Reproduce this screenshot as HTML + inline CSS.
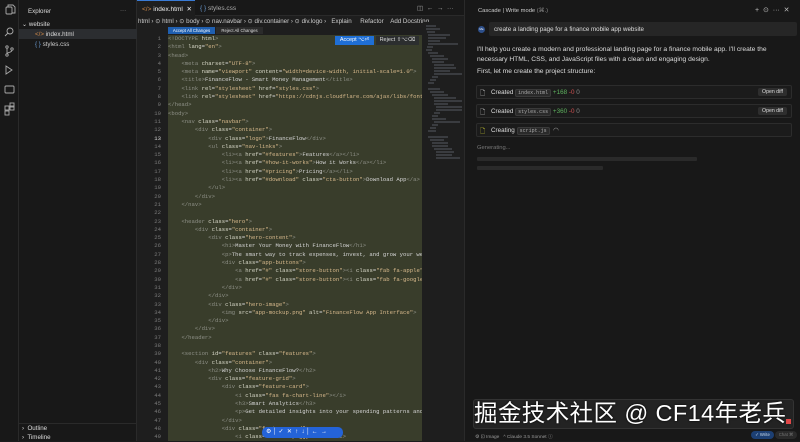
<!DOCTYPE html>
<html><head><meta charset="utf-8"><style>
*{margin:0;padding:0;box-sizing:border-box}
body{width:800px;height:441px;overflow:hidden;background:#1b1b1c;font-family:"Liberation Sans",sans-serif;color:#ccc;position:relative}
.abs{position:absolute}
#act{left:0;top:0;width:19px;height:441px;background:#181818;border-right:1px solid #2a2a2a}
#exp{left:19px;top:0;width:118px;height:441px;background:#181818;border-right:1px solid #2a2a2a;font-size:6.2px}
#tabs{left:137px;top:0;width:327px;height:16px;background:#181818;border-bottom:1px solid #2a2a2a}
#editor{left:137px;top:16px;width:327px;height:425px;background:#1e1e1e}
#code{left:168px;top:35px;width:254px;height:406px;background:#393d2b;overflow:hidden}
pre{font-family:"Liberation Mono",monospace;font-size:5.6px;line-height:8.3px;color:#d4d4d4;white-space:pre}
.t{color:#8d8f86}.a{color:#d8d8c8}.s{color:#d7b98c}
#gut{left:137px;top:35px;width:24px;text-align:right;color:#7a7a7a}
#mini{left:423px;top:22px;width:40px;height:419px;background:#1e1e1e}
#right{left:464px;top:0;width:336px;height:441px;background:#181818;border-left:1px solid #2a2a2a;font-size:6px}
.row{position:absolute;left:476px;width:316px;height:14px;border:1px solid #2c2c2c;border-radius:2px;background:#1b1b1b;font-size:6.3px;color:#ddd}
.chip{font-family:"Liberation Mono",monospace;background:#2a2a2a;border:1px solid #3a3a3a;border-radius:2px;padding:0 2px;font-size:5px;color:#aaa}
.btn{position:absolute;right:4px;top:2px;background:#2e2e2e;border-radius:2px;padding:1px 4px;font-size:5.2px;color:#ddd}
</style></head><body>
<div id="act" class="abs">
<svg width="19" height="120" viewBox="0 0 19 120" fill="none" stroke="#aaa" stroke-width="0.9">
<rect x="6" y="7" width="6" height="7" rx="1"/><path d="M8 7V5h5l2 2v6h-3"/>
<circle cx="10" cy="31" r="3"/><path d="M8 33l-3 3"/>
<circle cx="7" cy="47" r="1.2"/><circle cx="7" cy="55" r="1.2"/><circle cx="12" cy="49" r="1.2"/><path d="M7 48v6M12 50c0 3-5 2-5 4"/>
<path d="M6 66l6 4-6 4z"/>
<rect x="5" y="86" width="9" height="7" rx="1"/>
<rect x="5" y="106" width="4" height="4"/><rect x="10" y="106" width="4" height="4"/><rect x="5" y="111" width="4" height="4"/><rect x="10" y="103" width="4" height="4"/>
</svg></div>
<div id="exp" class="abs">
<div class="abs" style="left:9px;top:8px;color:#ddd">Explorer</div>
<div class="abs" style="left:101px;top:7px;color:#999">···</div>
<div class="abs" style="left:3px;top:21px;color:#ddd">⌄ website</div>
<div class="abs" style="left:0;top:29px;width:118px;height:10px;background:#2b2d30"></div>
<div class="abs" style="left:16px;top:31px;color:#ddd"><span style="color:#d08a4a">&lt;/&gt;</span> index.html</div>
<div class="abs" style="left:16px;top:41px;color:#ccc"><span style="color:#6a9ad0">{ }</span> styles.css</div>
<div class="abs" style="left:0;top:423px;width:118px;border-top:1px solid #2a2a2a"></div>
<div class="abs" style="left:3px;top:425px;color:#ddd">›&nbsp; Outline</div>
<div class="abs" style="left:3px;top:434px;color:#ddd">›&nbsp; Timeline</div>
</div>
<div id="tabs" class="abs" style="font-size:6.5px">
<div class="abs" style="left:0;top:0;width:58px;height:16px;background:#1e1e1e;border-top:1px solid #3a7bd5"></div>
<div class="abs" style="left:5px;top:5px;color:#eee"><span style="color:#d08a4a">&lt;/&gt;</span> index.html&nbsp; ✕</div>
<div class="abs" style="left:63px;top:5px;color:#aaa"><span style="color:#6a9ad0">{ }</span> styles.css</div>
<div class="abs" style="left:280px;top:4px;color:#aaa">◫&nbsp; ←&nbsp; →&nbsp; ···</div>
</div>
<div id="editor" class="abs"></div>
<div class="abs" style="left:138px;top:18px;font-size:6.2px;color:#ccc;white-space:nowrap">html › ⊙ html › ⊙ body › ⊙ nav.navbar › ⊙ div.container › ⊙ div.logo ›&nbsp;&nbsp; Explain&nbsp;&nbsp;&nbsp;&nbsp; Refactor&nbsp;&nbsp;&nbsp; Add Docstring</div>
<div class="abs" style="left:168px;top:27px;width:47px;height:7px;background:#1f5fb0;color:#fff;font-size:4.3px;line-height:7px;text-align:center">Accept All Changes</div>
<div class="abs" style="left:216px;top:27px;width:47px;height:7px;background:#2b2b2b;color:#ddd;font-size:4.3px;line-height:7px;text-align:center">Reject All Changes</div>
<div id="code" class="abs"><pre><span class="t">&lt;!DOCTYPE</span> <span class="a">html</span><span class="t">&gt;</span>
<span class="t">&lt;html</span> <span class="a">lang</span>=<span class="s">"en"</span><span class="t">&gt;</span>
<span class="t">&lt;head&gt;</span>
    <span class="t">&lt;meta</span> <span class="a">charset</span>=<span class="s">"UTF-8"</span><span class="t">&gt;</span>
    <span class="t">&lt;meta</span> <span class="a">name</span>=<span class="s">"viewport"</span> <span class="a">content</span>=<span class="s">"width=device-width, initial-scale=1.0"</span><span class="t">&gt;</span>
    <span class="t">&lt;title&gt;</span>FinanceFlow - Smart Money Management<span class="t">&lt;/title&gt;</span>
    <span class="t">&lt;link</span> <span class="a">rel</span>=<span class="s">"stylesheet"</span> <span class="a">href</span>=<span class="s">"styles.css"</span><span class="t">&gt;</span>
    <span class="t">&lt;link</span> <span class="a">rel</span>=<span class="s">"stylesheet"</span> <span class="a">href</span>=<span class="s">"https://cdnjs.cloudflare.com/ajax/libs/font</span>
<span class="t">&lt;/head&gt;</span>
<span class="t">&lt;body&gt;</span>
    <span class="t">&lt;nav</span> <span class="a">class</span>=<span class="s">"navbar"</span><span class="t">&gt;</span>
        <span class="t">&lt;div</span> <span class="a">class</span>=<span class="s">"container"</span><span class="t">&gt;</span>
            <span class="t">&lt;div</span> <span class="a">class</span>=<span class="s">"logo"</span><span class="t">&gt;</span>FinanceFlow<span class="t">&lt;/div&gt;</span>
            <span class="t">&lt;ul</span> <span class="a">class</span>=<span class="s">"nav-links"</span><span class="t">&gt;</span>
                <span class="t">&lt;li&gt;&lt;a</span> <span class="a">href</span>=<span class="s">"#features"</span><span class="t">&gt;</span>Features<span class="t">&lt;/a&gt;&lt;/li&gt;</span>
                <span class="t">&lt;li&gt;&lt;a</span> <span class="a">href</span>=<span class="s">"#how-it-works"</span><span class="t">&gt;</span>How it Works<span class="t">&lt;/a&gt;&lt;/li&gt;</span>
                <span class="t">&lt;li&gt;&lt;a</span> <span class="a">href</span>=<span class="s">"#pricing"</span><span class="t">&gt;</span>Pricing<span class="t">&lt;/a&gt;&lt;/li&gt;</span>
                <span class="t">&lt;li&gt;&lt;a</span> <span class="a">href</span>=<span class="s">"#download"</span> <span class="a">class</span>=<span class="s">"cta-button"</span><span class="t">&gt;</span>Download App<span class="t">&lt;/a&gt;</span>
            <span class="t">&lt;/ul&gt;</span>
        <span class="t">&lt;/div&gt;</span>
    <span class="t">&lt;/nav&gt;</span>

    <span class="t">&lt;header</span> <span class="a">class</span>=<span class="s">"hero"</span><span class="t">&gt;</span>
        <span class="t">&lt;div</span> <span class="a">class</span>=<span class="s">"container"</span><span class="t">&gt;</span>
            <span class="t">&lt;div</span> <span class="a">class</span>=<span class="s">"hero-content"</span><span class="t">&gt;</span>
                <span class="t">&lt;h1&gt;</span>Master Your Money with FinanceFlow<span class="t">&lt;/h1&gt;</span>
                <span class="t">&lt;p&gt;</span>The smart way to track expenses, invest, and grow your wealth
                <span class="t">&lt;div</span> <span class="a">class</span>=<span class="s">"app-buttons"</span><span class="t">&gt;</span>
                    <span class="t">&lt;a</span> <span class="a">href</span>=<span class="s">"#"</span> <span class="a">class</span>=<span class="s">"store-button"</span><span class="t">&gt;&lt;i</span> <span class="a">class</span>=<span class="s">"fab fa-apple"</span>
                    <span class="t">&lt;a</span> <span class="a">href</span>=<span class="s">"#"</span> <span class="a">class</span>=<span class="s">"store-button"</span><span class="t">&gt;&lt;i</span> <span class="a">class</span>=<span class="s">"fab fa-google</span>
                <span class="t">&lt;/div&gt;</span>
            <span class="t">&lt;/div&gt;</span>
            <span class="t">&lt;div</span> <span class="a">class</span>=<span class="s">"hero-image"</span><span class="t">&gt;</span>
                <span class="t">&lt;img</span> <span class="a">src</span>=<span class="s">"app-mockup.png"</span> <span class="a">alt</span>=<span class="s">"FinanceFlow App Interface"</span><span class="t">&gt;</span>
            <span class="t">&lt;/div&gt;</span>
        <span class="t">&lt;/div&gt;</span>
    <span class="t">&lt;/header&gt;</span>

    <span class="t">&lt;section</span> <span class="a">id</span>=<span class="s">"features"</span> <span class="a">class</span>=<span class="s">"features"</span><span class="t">&gt;</span>
        <span class="t">&lt;div</span> <span class="a">class</span>=<span class="s">"container"</span><span class="t">&gt;</span>
            <span class="t">&lt;h2&gt;</span>Why Choose FinanceFlow?<span class="t">&lt;/h2&gt;</span>
            <span class="t">&lt;div</span> <span class="a">class</span>=<span class="s">"feature-grid"</span><span class="t">&gt;</span>
                <span class="t">&lt;div</span> <span class="a">class</span>=<span class="s">"feature-card"</span><span class="t">&gt;</span>
                    <span class="t">&lt;i</span> <span class="a">class</span>=<span class="s">"fas fa-chart-line"</span><span class="t">&gt;&lt;/i&gt;</span>
                    <span class="t">&lt;h3&gt;</span>Smart Analytics<span class="t">&lt;/h3&gt;</span>
                    <span class="t">&lt;p&gt;</span>Get detailed insights into your spending patterns and
                <span class="t">&lt;/div&gt;</span>
                <span class="t">&lt;div</span> <span class="a">class</span>=<span class="s">"feature-card"</span><span class="t">&gt;</span>
                    <span class="t">&lt;i</span> <span class="a">class</span>=<span class="s">"fas fa-piggy-bank"</span><span class="t">&gt;&lt;/i&gt;</span></pre></div>
<div id="gut" class="abs"><pre style="color:#7a7a7a">1
2
3
4
5
6
7
8
9
10
11
12
<span style="color:#ddd">13</span>
14
15
16
17
18
19
20
21
22
23
24
25
26
27
28
29
30
31
32
33
34
35
36
37
38
39
40
41
42
43
44
45
46
47
48
49</pre></div>
<div class="abs" style="left:335px;top:36px;width:39px;height:9px;background:#1f6fd6;color:#fff;font-size:5.5px;line-height:9px;text-align:center">Accept ⌥⏎</div>
<div class="abs" style="left:376px;top:36px;width:43px;height:9px;background:#2c2e2f;color:#ddd;font-size:5.5px;line-height:9px;text-align:center">Reject ⇧⌥⌫</div>
<div id="mini" class="abs">
<svg width="40" height="140" stroke="#6a6e78" stroke-width="0.7">
<path d="M3 4h10M3 7h14M4 10h8M5 13h22M5 16h18M5 19h12M5 22h30M4 25h6M3 28h6M5 31h10M7 34h14M9 37h16M9 40h12M11 43h20M11 46h22M11 49h16M11 52h28M9 55h6M7 58h6M5 61h6M5 67h12M7 70h14M9 73h16M11 76h22M11 79h28M11 82h14M13 85h26M13 88h26M11 91h6M9 94h6M9 97h14M11 100h26M9 103h6M7 106h6M5 109h8M5 115h20M7 118h14M9 121h16M9 124h16M11 127h18M13 130h18M13 133h16M13 136h24"/>
</svg></div>
<div id="right" class="abs">
<div class="abs" style="left:13px;top:8px;color:#ccc;font-size:5.8px">Cascade | Write mode <span style="color:#888">(⌘.)</span></div>
<div class="abs" style="left:290px;top:6px;color:#bbb;font-size:7px">+&nbsp; ⊙&nbsp; ···&nbsp; ✕</div>
<div class="abs" style="left:24px;top:22px;width:308px;height:14px;background:#262626;border-radius:2px"></div>
<div class="abs" style="left:13px;top:26px;width:7px;height:7px;border-radius:50%;background:#2d4f8a;color:#fff;font-size:3px;text-align:center;line-height:7px">Me</div>
<div class="abs" style="left:29px;top:26px;color:#ddd;font-size:6.2px">create a landing page for a finance mobile app website</div>
<div class="abs" style="left:12px;top:45px;width:310px;color:#ddd;font-size:6.7px;line-height:10px">I'll help you create a modern and professional landing page for a finance mobile app. I'll create the necessary HTML, CSS, and JavaScript files with a clean and engaging design.</div>
<div class="abs" style="left:12px;top:68px;color:#ddd;font-size:6.7px">First, let me create the project structure:</div>
<div class="abs" style="left:12px;top:145px;color:#777;font-size:5.8px">Generating...</div>
<div class="abs" style="left:12px;top:157px;width:220px;height:4px;background:#2a2a2a;border-radius:1px"></div>
<div class="abs" style="left:12px;top:166px;width:126px;height:4px;background:#2a2a2a;border-radius:1px"></div>
<div class="abs" style="left:8px;top:399px;width:321px;height:30px;background:#232323;border:1px solid #333;border-radius:3px"></div>
<div class="abs" style="left:10px;top:433px;color:#999;font-size:4.8px">⚙ ⊡ Image&nbsp;&nbsp; ^ Claude 3.5 Sonnet ⓘ</div>
<div class="abs" style="left:286px;top:431px;width:23px;height:8px;background:#1c3f73;border-radius:4px;color:#cde;font-size:4.3px;line-height:8px;text-align:center">✓ Write</div>
<div class="abs" style="left:310px;top:431px;width:22px;height:8px;background:#2a2a2a;border-radius:4px;color:#777;font-size:4.3px;line-height:8px;text-align:center">Chat ⌘</div>
</div>
<div class="row" style="top:85px"><span class="abs" style="left:3px;top:2px">🗋</span><span class="abs" style="left:14px;top:3px">Created <span class="chip">index.html</span> <span style="color:#5fb35f">+168</span> <span style="color:#d05050">-0</span> <span style="color:#888">0</span></span><span class="btn">Open diff</span></div>
<div class="row" style="top:104px"><span class="abs" style="left:3px;top:2px">🗋</span><span class="abs" style="left:14px;top:3px">Created <span class="chip">styles.css</span> <span style="color:#5fb35f">+360</span> <span style="color:#d05050">-0</span> <span style="color:#888">0</span></span><span class="btn">Open diff</span></div>
<div class="row" style="top:123px"><span class="abs" style="left:3px;top:2px;color:#dd3">🗋</span><span class="abs" style="left:14px;top:3px">Creating <span class="chip">script.js</span>&nbsp; <span style="color:#aaa">◠</span></span></div>
<div class="abs" style="left:474px;top:399px;color:#fff;font-size:23.5px;letter-spacing:0.4px;font-family:'Liberation Sans','Noto Sans CJK SC',sans-serif;line-height:28px;white-space:nowrap;text-shadow:0 0 2px #000">掘金技术社区 @ CF14年老兵</div>
<div class="abs" style="left:786px;top:419px;width:5px;height:5px;background:#e04848"></div>
<div class="abs" style="left:262px;top:427px;width:81px;height:11px;background:#2463d8;border-radius:5px;color:#fff;font-size:6px;line-height:11px;padding-left:4px;white-space:nowrap">⚙ │ ✓&nbsp; ✕&nbsp; ↑&nbsp; ↓ │ ←&nbsp; →</div>
</body></html>
